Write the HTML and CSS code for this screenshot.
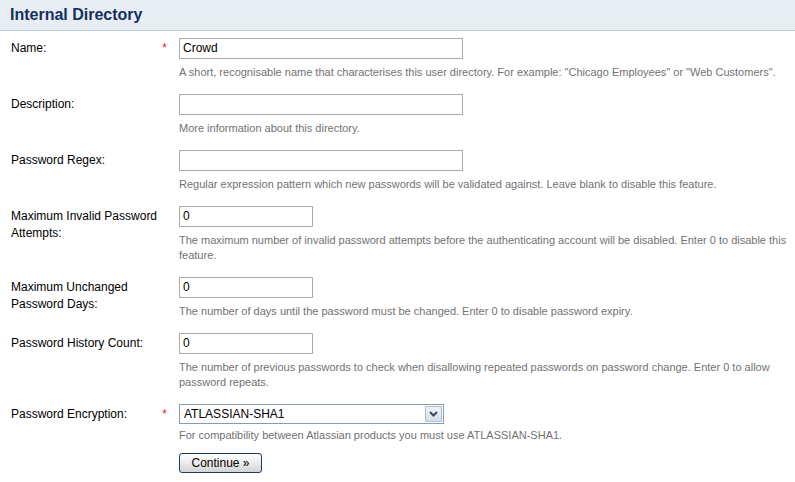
FILE: index.html
```html
<!DOCTYPE html>
<html>
<head>
<meta charset="utf-8">
<link rel="stylesheet" href="styles.css">
</head>
<body>
<div class="panel">
  <h2 class="title">Internal Directory</h2>
  <form class="form">
    <div class="row">
      <div class="label"><span>Name:</span><span class="req">*</span></div>
      <div class="field">
        <div class="input long">Crowd</div>
        <div class="desc">A short, recognisable name that characterises this user directory. For example: "Chicago Employees" or "Web Customers".</div>
      </div>
    </div>
    <div class="row">
      <div class="label"><span>Description:</span></div>
      <div class="field">
        <div class="input long"></div>
        <div class="desc">More information about this directory.</div>
      </div>
    </div>
    <div class="row">
      <div class="label"><span>Password Regex:</span></div>
      <div class="field">
        <div class="input long"></div>
        <div class="desc">Regular expression pattern which new passwords will be validated against. Leave blank to disable this feature.</div>
      </div>
    </div>
    <div class="row">
      <div class="label"><span>Maximum Invalid Password Attempts:</span></div>
      <div class="field">
        <div class="input short">0</div>
        <div class="desc">The maximum number of invalid password attempts before the authenticating account will be disabled. Enter 0 to disable this feature.</div>
      </div>
    </div>
    <div class="row">
      <div class="label"><span>Maximum Unchanged Password Days:</span></div>
      <div class="field">
        <div class="input short">0</div>
        <div class="desc">The number of days until the password must be changed. Enter 0 to disable password expiry.</div>
      </div>
    </div>
    <div class="row">
      <div class="label"><span>Password History Count:</span></div>
      <div class="field">
        <div class="input short">0</div>
        <div class="desc">The number of previous passwords to check when disallowing repeated passwords on password change. Enter 0 to allow password repeats.</div>
      </div>
    </div>
    <div class="row last">
      <div class="label"><span>Password Encryption:</span><span class="req">*</span></div>
      <div class="field">
        <div class="select">
          <span class="select-text">ATLASSIAN-SHA1</span>
          <span class="select-btn"><svg width="9" height="6" viewBox="0 0 9 6"><path d="M1 1 L4.5 4.5 L8 1" fill="none" stroke="#3a4a6a" stroke-width="2"/></svg></span>
        </div>
        <div class="desc sel-desc">For compatibility between Atlassian products you must use ATLASSIAN-SHA1.</div>
        <div class="button">Continue »</div>
      </div>
    </div>
  </form>
</div>
</body>
</html>
```

FILE: styles.css
```css
* { box-sizing: border-box; }
html, body {
  margin: 0;
  padding: 0;
  background: #fff;
  font-family: "Liberation Sans", Arial, sans-serif;
  color: #000;
}
.title {
  margin: 0;
  height: 31px;
  padding: 6px 0 0 10px;
  background: #e8edf4;
  border-bottom: 1px solid #bccbdc;
  font-size: 16px;
  line-height: 18px;
  font-weight: bold;
  color: #12315e;
}
.form {
  padding-top: 7px;
}
.row {
  display: grid;
  grid-template-columns: 168px 1fr;
  padding-left: 11px;
  padding-bottom: 14px;
}
.label {
  display: flex;
  justify-content: space-between;
  align-items: flex-start;
  padding-right: 12px;
  padding-top: 2px;
  font-size: 12px;
  line-height: 17px;
}
.label span:first-child { max-width: 150px; }
.req {
  color: #e0203a;
  font-size: 12px;
}
.field {
  padding-right: 0;
}
.input {
  height: 21px;
  border: 1px solid #a5acb2;
  padding: 0 3px;
  font-size: 12px;
  line-height: 19px;
}
.long { width: 284px; }
.short { width: 134px; }
.desc {
  margin-top: 6px;
  font-size: 11px;
  line-height: 15px;
  color: #727272;
}
.select {
  display: flex;
  width: 265px;
  height: 20px;
  border: 1px solid #7f9db9;
  font-size: 12px;
}
.select-text {
  flex: 1;
  padding-left: 4px;
  line-height: 18px;
}
.select-btn {
  width: 17px;
  margin: 1px;
  display: flex;
  align-items: center;
  justify-content: center;
  background: linear-gradient(#f2f4f8, #d8dde6);
  border: 1px solid #b2bac8;
  border-radius: 1px;
}
.sel-desc { margin-top: 4px; }
.button {
  margin-top: 10px;
  width: 83px;
  height: 20px;
  border: 1px solid #1d3a66;
  border-radius: 3px;
  background: linear-gradient(#ffffff, #e6e6e6 60%, #d4d4d4);
  font-size: 12px;
  line-height: 18px;
  text-align: center;
}
```
